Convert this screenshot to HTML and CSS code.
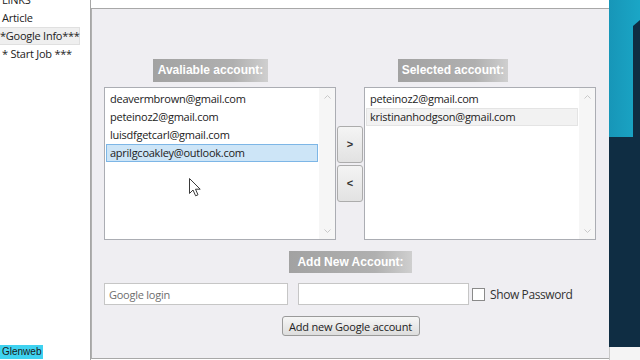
FILE: index.html
```html
<!DOCTYPE html>
<html lang="en">
<head>
<meta charset="UTF-8">
<meta name="viewport" content="width=device-width, initial-scale=1.0">
<title>Google Info</title>
<link rel="stylesheet" href="styles.css">
</head>
<body>
<div class="window">
  <aside class="sidebar">
    <ul class="links">
      <li>LINKS</li>
      <li>Article</li>
      <li class="current">*Google Info***</li>
      <li>* Start Job ***</li>
    </ul>
    <div class="site-tag">Glenweb</div>
  </aside>

  <main class="main">
    <div class="top-strip"></div>
    <section class="panel">
      <div class="accounts">
        <h3 class="caption caption-left">Avaliable account:</h3>
        <span></span>
        <h3 class="caption caption-right">Selected account:</h3>

        <div class="listbox">
          <ul class="items">
            <li>deavermbrown@gmail.com</li>
            <li>peteinoz2@gmail.com</li>
            <li>luisdfgetcarl@gmail.com</li>
            <li class="selected">aprilgcoakley@outlook.com</li>
          </ul>
          <div class="scrollbar">
            <svg width="7" height="4" viewBox="0 0 7 4"><path d="M0.5 3.5 L3.5 0.5 L6.5 3.5" fill="none" stroke="#c9c9c9"/></svg>
            <svg width="7" height="4" viewBox="0 0 7 4"><path d="M0.5 0.5 L3.5 3.5 L6.5 0.5" fill="none" stroke="#c9c9c9"/></svg>
          </div>
        </div>

        <div class="move-buttons">
          <button class="arrow-btn">&gt;</button>
          <button class="arrow-btn">&lt;</button>
        </div>

        <div class="listbox">
          <ul class="items">
            <li>peteinoz2@gmail.com</li>
            <li class="hover">kristinanhodgson@gmail.com</li>
          </ul>
          <div class="scrollbar">
            <svg width="7" height="4" viewBox="0 0 7 4"><path d="M0.5 3.5 L3.5 0.5 L6.5 3.5" fill="none" stroke="#c9c9c9"/></svg>
            <svg width="7" height="4" viewBox="0 0 7 4"><path d="M0.5 0.5 L3.5 3.5 L6.5 0.5" fill="none" stroke="#c9c9c9"/></svg>
          </div>
        </div>
      </div>

      <h3 class="caption caption-center">Add New Account:</h3>

      <div class="new-account">
        <input type="text" class="field login" placeholder="Google login">
        <input type="password" class="field password">
        <label class="show-pass"><span class="check"></span>Show Password</label>
      </div>

      <button class="add-btn">Add new Google account</button>

      <!-- mouse pointer over the list -->
      <svg class="cursor" width="13" height="19" viewBox="0 0 13 19">
        <path d="M0.5 0.5 L0.5 15.5 L4 12 L6.6 17.8 L9 16.8 L6.5 11.2 L11.2 11.2 Z" fill="#fff" stroke="#3a3a3a" stroke-linejoin="round"/>
      </svg>
    </section>
  </main>

  <div class="decor">
    <div class="decor-top"><div class="decor-notch"></div></div>
    <div class="decor-mid"></div>
    <div class="decor-foot"></div>
  </div>
</div>
</body>
</html>
```

FILE: styles.css
```css
/* Google Info window */
* {
  box-sizing: border-box;
}

body {
  margin: 0;
  font-family: "Open Sans", "Noto Sans", sans-serif;
  font-size: 11px;
  letter-spacing: -0.25px;
  color: #222;
  overflow: hidden;
}

.window {
  display: flex;
  width: 640px;
  height: 360px;
  background: #fff;
}

/* left link list */
.sidebar {
  width: 91px;
  border-right: 1px solid #a6a6a6;
  display: flex;
  flex-direction: column;
  justify-content: space-between;
}

.links {
  list-style: none;
  margin: -9px 0 0;
  padding: 0;
}

.links li {
  height: 18px;
  line-height: 18px;
  padding-left: 2px;
  white-space: nowrap;
}

.links .current {
  width: 80px;
  padding-left: 0;
  line-height: 16px;
  background: #efefef;
  border: 1px solid #e0e0e0;
  border-left: none;
}

.site-tag {
  align-self: flex-start;
  height: 14px;
  line-height: 14px;
  padding: 0 2px;
  margin-bottom: 1px;
  background: #3fd2f0;
  color: #1a1a1a;
  font-family: "Liberation Sans", sans-serif;
  font-size: 10px;
  letter-spacing: 0;
}

/* main panel */
.main {
  width: 518px;
  display: flex;
  flex-direction: column;
}

.top-strip {
  height: 9px;
  background: #fff;
  border-bottom: 1px solid #a8a8a8;
}

.panel {
  flex: 1;
  position: relative;
  display: flex;
  flex-direction: column;
  padding-top: 50px;
  margin-bottom: 1px;
  background: #efeef2;
  border-left: 1px solid #b0b0b0;
  border-bottom: 1px solid #a8a8a8;
}

.accounts {
  display: grid;
  grid-template-columns: 232px 26px 232px;
  grid-template-rows: 23px 153px;
  column-gap: 1px;
  row-gap: 5px;
  margin-left: 12px;
}

.caption {
  margin: 0;
  height: 23px;
  justify-self: start;
  text-align: center;
  font: bold 12px "Liberation Sans", Arial, sans-serif;
  line-height: 23px;
  letter-spacing: 0;
  color: #fff;
  background: linear-gradient(to right, #a2a2a2, #b0b0b0 70%, #cfcfcf);
}

.caption-left {
  width: 115px;
  margin-left: 49px;
}

.caption-right {
  width: 110px;
  margin-left: 34px;
}

.caption-center {
  align-self: center;
  width: 123px;
  height: 22px;
  line-height: 22px;
  margin-top: 11px;
}

.listbox {
  display: flex;
  background: #fff;
  border: 1px solid #abadb3;
}

.items {
  flex: 1;
  list-style: none;
  margin: 0;
  padding: 2px 1px 0;
}

.items li {
  height: 18px;
  line-height: 16px;
  padding-left: 3px;
  border: 1px solid transparent;
  white-space: nowrap;
}

.items .selected {
  background: #cde5f7;
  border-color: #7db6e6;
}

.items .hover {
  background: #f2f2f2;
  border-color: #e4e4e4;
}

.scrollbar {
  width: 16px;
  display: flex;
  flex-direction: column;
  justify-content: space-between;
  align-items: center;
  padding: 7px 0 6px;
  background: #f6f6f6;
}

.move-buttons {
  display: flex;
  flex-direction: column;
  justify-content: center;
  gap: 2px;
}

.arrow-btn {
  height: 37px;
  padding: 0;
  border: 1px solid #acacac;
  border-radius: 3px;
  background: linear-gradient(#f4f4f4, #e2e2e2);
  font: bold 11px "Liberation Sans", Arial, sans-serif;
  color: #333;
}

/* add account row */
.new-account {
  display: flex;
  align-items: center;
  margin: 10px 0 0 12px;
}

.field {
  height: 22px;
  padding: 0 4px;
  border: 1px solid #c6c6c6;
  background: #fff;
  font: 11px "Open Sans", "Noto Sans", sans-serif;
  letter-spacing: -0.25px;
  color: #222;
}

.field::placeholder {
  color: #6e6e6e;
}

.login {
  width: 184px;
}

.password {
  width: 171px;
  margin-left: 10px;
}

.show-pass {
  display: flex;
  align-items: center;
  margin-left: 3px;
  font-size: 12px;
  letter-spacing: -0.4px;
  color: #333;
}

.check {
  width: 13px;
  height: 13px;
  margin-right: 5px;
  border: 1px solid #8a8a8a;
  background: #fff;
}

.add-btn {
  align-self: center;
  width: 138px;
  height: 20px;
  margin-top: 11px;
  padding: 0;
  border: 1px solid #9a9a9a;
  border-radius: 3px;
  background: linear-gradient(#f6f6f6, #dddddd);
  font: 11px "Open Sans", "Noto Sans", sans-serif;
  letter-spacing: -0.2px;
  color: #222;
}

.cursor {
  position: absolute;
  left: 97px;
  top: 169px;
}

/* right window edge */
.decor {
  width: 31px;
  display: flex;
  flex-direction: column;
}

.decor-top {
  height: 137px;
  display: flex;
  justify-content: flex-end;
  background: linear-gradient(to right, #1796b8, #1aa6c6);
}

.decor-notch {
  width: 7px;
  margin-top: 20px;
  background: #0f2d43;
  clip-path: polygon(0 6px, 100% 0, 100% 100%, 0 100%);
}

.decor-mid {
  flex: 1;
  background: #0f2d43;
}

.decor-foot {
  height: 13px;
  background: #f4f4f4;
  border-left: 1px solid #c8c8c8;
}
```
